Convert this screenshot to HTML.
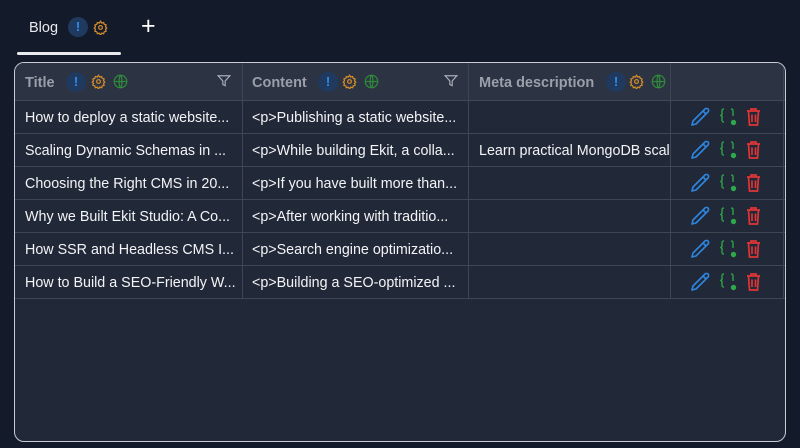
<!DOCTYPE html>
<html><head><style>
*{box-sizing:border-box;margin:0;padding:0}
body{width:800px;height:448px;background:#131a29;font-family:"Liberation Sans",Arial,sans-serif;position:relative;overflow:hidden;color:#f1f3f6}
.tab{position:absolute;left:29px;top:20px;font-size:14.5px;color:#e8eaee}
.ul{position:absolute;left:17px;top:52px;width:104px;height:3px;background:#e8eaee;border-radius:2px}
.plus{position:absolute;left:141px;top:12px;font-size:25px;color:#fff}
.box{position:absolute;left:14px;top:62px;width:772px;height:380px;border:1.5px solid #c9ccd2;border-radius:10px;background:#212838;overflow:hidden}
.hdr{position:absolute;left:0;top:0;width:100%;height:38px;background:#2c3342;border-bottom:1px solid #414857}
.h{position:absolute;top:12px;font-size:14.5px;font-weight:bold;color:#9aa0aa}
.row{position:absolute;left:0;width:100%;height:33px;border-bottom:1px solid #3e4553}
.c{position:absolute;top:9px;font-size:14.3px;color:#f3f4f6;white-space:nowrap}
.vl{position:absolute;top:0;width:1px;height:235px;background:#3e4553}
.ex{position:absolute;width:20px;height:20px;border-radius:50%;background:#1f3a5e;color:#2f8df0;font-size:13px;font-weight:bold;text-align:center;line-height:20px}
svg{position:absolute}
</style></head><body>
<div class="tab">Blog</div>
<div class="ex" style="left:68px;top:17px">!</div>
<svg style="left:93px;top:20px" width="15" height="15" viewBox="0 0 24 24" fill="none" stroke="#d08a2a" stroke-width="2"><circle cx="12" cy="12" r="3"/><path d="M12 2l2 3 3-1 1 3 3 1-1 3 2 2-2 2 1 3-3 1-1 3-3-1-2 3-2-3-3 1-1-3-3-1 1-3-2-2 2-2-1-3 3-1 1-3 3 1z"/></svg>
<div class="ul"></div>
<div class="plus">+</div>
<div class="box">
<div class="hdr">
<div class="h" style="left:10px">Title</div>
<div class="ex" style="left:51px;top:9px">!</div>
<svg style="left:76px;top:11px" width="15" height="15" viewBox="0 0 24 24" fill="none" stroke="#d08a2a" stroke-width="2"><circle cx="12" cy="12" r="3"/><path d="M12 2l2 3 3-1 1 3 3 1-1 3 2 2-2 2 1 3-3 1-1 3-3-1-2 3-2-3-3 1-1-3-3-1 1-3-2-2 2-2-1-3 3-1 1-3 3 1z"/></svg>
<svg style="left:98px;top:11px" width="15" height="15" viewBox="0 0 24 24" fill="none" stroke="#2e8a3a" stroke-width="2"><circle cx="12" cy="12" r="10"/><path d="M2 12h20M12 2c3 3 3 17 0 20M12 2c-3 3-3 17 0 20"/></svg>
<svg style="left:202px;top:11px" width="14" height="14" viewBox="0 0 24 24" fill="none" stroke="#a8adb6" stroke-width="2"><path d="M2 3h20l-8 9v8l-4-2v-6z"/></svg>
<div class="h" style="left:237px">Content</div>
<div class="ex" style="left:303px;top:9px">!</div>
<svg style="left:327px;top:11px" width="15" height="15" viewBox="0 0 24 24" fill="none" stroke="#d08a2a" stroke-width="2"><circle cx="12" cy="12" r="3"/><path d="M12 2l2 3 3-1 1 3 3 1-1 3 2 2-2 2 1 3-3 1-1 3-3-1-2 3-2-3-3 1-1-3-3-1 1-3-2-2 2-2-1-3 3-1 1-3 3 1z"/></svg>
<svg style="left:349px;top:11px" width="15" height="15" viewBox="0 0 24 24" fill="none" stroke="#2e8a3a" stroke-width="2"><circle cx="12" cy="12" r="10"/><path d="M2 12h20M12 2c3 3 3 17 0 20M12 2c-3 3-3 17 0 20"/></svg>
<svg style="left:429px;top:11px" width="14" height="14" viewBox="0 0 24 24" fill="none" stroke="#a8adb6" stroke-width="2"><path d="M2 3h20l-8 9v8l-4-2v-6z"/></svg>
<div class="h" style="left:464px">Meta description</div>
<div class="ex" style="left:591px;top:9px">!</div>
<svg style="left:614px;top:11px" width="15" height="15" viewBox="0 0 24 24" fill="none" stroke="#d08a2a" stroke-width="2"><circle cx="12" cy="12" r="3"/><path d="M12 2l2 3 3-1 1 3 3 1-1 3 2 2-2 2 1 3-3 1-1 3-3-1-2 3-2-3-3 1-1-3-3-1 1-3-2-2 2-2-1-3 3-1 1-3 3 1z"/></svg>
<svg style="left:636px;top:11px" width="15" height="15" viewBox="0 0 24 24" fill="none" stroke="#2e8a3a" stroke-width="2"><circle cx="12" cy="12" r="10"/><path d="M2 12h20M12 2c3 3 3 17 0 20M12 2c-3 3-3 17 0 20"/></svg>
</div>
<div class="vl" style="left:227px"></div>
<div class="vl" style="left:453px"></div>
<div class="vl" style="left:655px"></div>
<div class="vl" style="left:768px"></div>

<div class="row" style="top:38px"><div class="c" style="left:10px">How to deploy a static website...</div><div class="c" style="left:237px">&lt;p&gt;Publishing a static website...</div></div>
<div class="row" style="top:71px"><div class="c" style="left:10px">Scaling Dynamic Schemas in ...</div><div class="c" style="left:237px">&lt;p&gt;While building Ekit, a colla...</div><div class="c" style="left:464px;width:191px;overflow:hidden">Learn practical MongoDB scal</div></div>
<div class="row" style="top:104px"><div class="c" style="left:10px">Choosing the Right CMS in 20...</div><div class="c" style="left:237px">&lt;p&gt;If you have built more than...</div></div>
<div class="row" style="top:137px"><div class="c" style="left:10px">Why we Built Ekit Studio: A Co...</div><div class="c" style="left:237px">&lt;p&gt;After working with traditio...</div></div>
<div class="row" style="top:170px"><div class="c" style="left:10px">How SSR and Headless CMS I...</div><div class="c" style="left:237px">&lt;p&gt;Search engine optimizatio...</div></div>
<div class="row" style="top:203px"><div class="c" style="left:10px">How to Build a SEO-Friendly W...</div><div class="c" style="left:237px">&lt;p&gt;Building a SEO-optimized ...</div></div>

<svg style="left:0;top:0" width="772" height="300">
<g id="a">
<path d="M677 62l1-4 12-12a2.1 2.1 0 0 1 3 3l-12 12z M688 48l3 3" fill="none" stroke="#2f86e0" stroke-width="1.6" stroke-linejoin="round"/>
<path d="M709 46q-2 0-2 2v3.5l-1.2 1 1.2 1v3.5q0 2 2 2M716 46q2 0 2 2v5" fill="none" stroke="#2e9a45" stroke-width="1.5"/>
<circle cx="718.5" cy="59.5" r="2.7" fill="#2ea84a"/>
<path d="M732 48h13M736 48v-2h5v2M733.5 48l1 14h8l1-14M737 51.5v7.5M740.5 51.5v7.5" fill="none" stroke="#e03535" stroke-width="1.7"/>
</g>
<use href="#a" y="33"/><use href="#a" y="66"/><use href="#a" y="99"/><use href="#a" y="132"/><use href="#a" y="165"/>
</svg>
</div>
</body></html>
